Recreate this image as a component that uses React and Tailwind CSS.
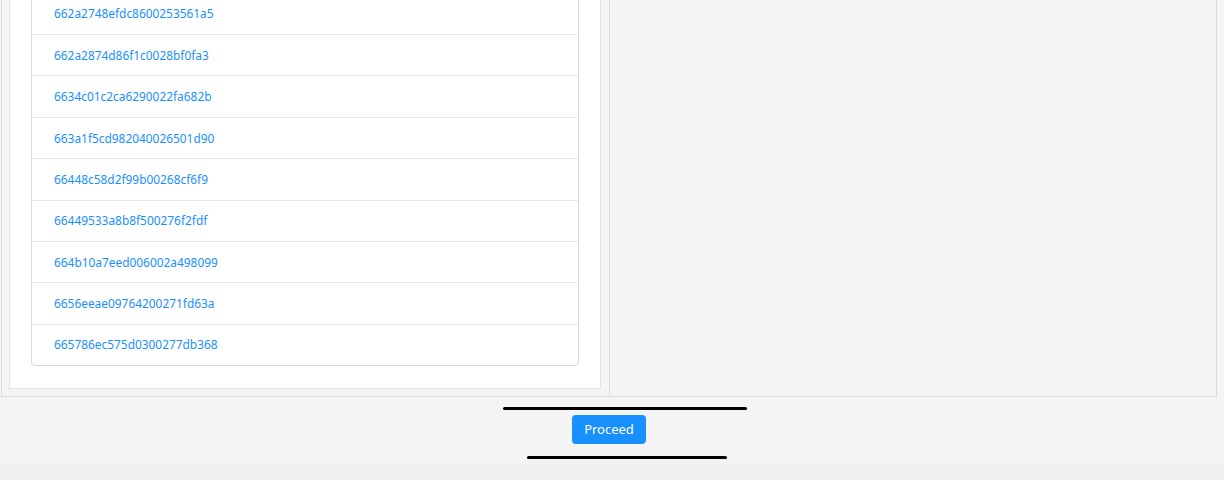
import React from "react";

const ids = [
  "662a2748efdc8600253561a5",
  "662a2874d86f1c0028bf0fa3",
  "6634c01c2ca6290022fa682b",
  "663a1f5cd982040026501d90",
  "66448c58d2f99b00268cf6f9",
  "66449533a8b8f500276f2fdf",
  "664b10a7eed006002a498099",
  "6656eeae09764200271fd63a",
  "665786ec575d0300277db368",
];

export default function App() {
  return (
    <div
      className="h-[480px] overflow-hidden bg-[#f0f0f0]"
      style={{ fontFamily: '"Noto Sans", "Open Sans", sans-serif' }}
    >
      <div className="flex h-[464px] flex-col overflow-hidden bg-[#f4f4f4]">
        {/* zone principale, déjà défilée vers le bas */}
        <div className="-mt-[36.375px] ml-[1px] flex w-[1216px] border border-t-0 border-[#dcdcdc]">
          <div className="w-[608px] border-r border-[#dcdcdc] pb-[7px] pl-[7px] pt-[7px]">
            <div className="w-[592px] border border-[#e4e4e4] bg-white px-[21px] pb-[22px] pt-[21px]">
              <ul className="rounded-[4px] border border-[#d9d9d9]">
                {ids.map((id, i) => (
                  <li
                    key={id}
                    className={`flex items-center pl-[22px] pt-[1px] text-[11.9px] text-[#1890ff] ${
                      i < ids.length - 1
                        ? "h-[41.375px] border-b border-[#e8e8e8]"
                        : "h-[40.375px]"
                    }`}
                  >
                    {id}
                  </li>
                ))}
              </ul>
            </div>
          </div>
          <div className="flex-1" />
        </div>

        {/* bas de page */}
        <div className="flex flex-col items-start">
          <div className="ml-[503px] mt-[10px] h-[3px] w-[244px] rounded-full bg-black" />
          <button className="ml-[572px] mt-[5px] h-[29px] w-[74px] rounded-[4px] bg-[#1890ff] text-[13px] text-white">
            Proceed
          </button>
          <div className="ml-[527px] mt-[12px] h-[3px] w-[200px] rounded-full bg-black" />
        </div>
      </div>
    </div>
  );
}
